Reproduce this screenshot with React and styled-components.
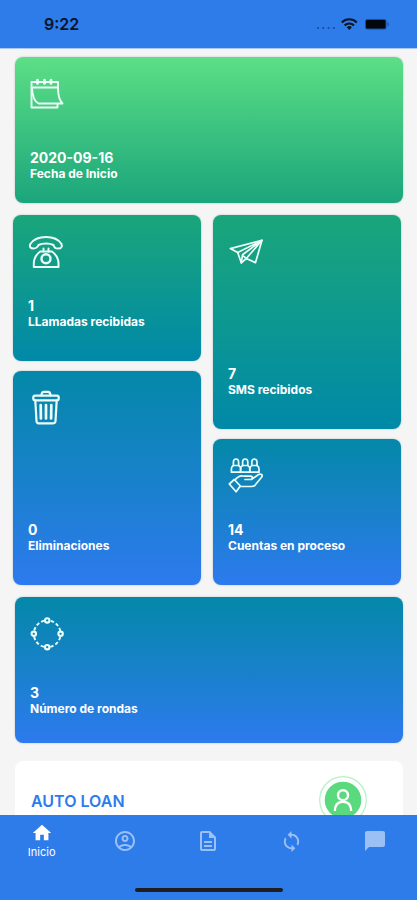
import React from "react";
import styled, { createGlobalStyle } from "styled-components";
import {
  MdHome,
  MdOutlineAccountCircle,
  MdOutlineDescription,
  MdSync,
  MdChatBubble,
} from "react-icons/md";

const BLUE = "#2e7bea";

const GlobalStyle = createGlobalStyle`
  *, *::before, *::after { box-sizing: border-box; }
  body { margin: 0; font-family: Inter, "Liberation Sans", sans-serif; }
`;

const Screen = styled.div`
  display: flex;
  flex-direction: column;
  height: 100vh;
  background: #f5f5f5;
`;

const StatusBar = styled.header`
  flex: none;
  display: flex;
  align-items: center;
  justify-content: space-between;
  height: 49px;
  padding: 0 27px 0 44px;
  background: ${BLUE};
  border-bottom: 1px solid #a9c8f8;
  color: #0b1526;
`;

const Clock = styled.time`
  font-size: 16px;
  font-weight: 600;
  line-height: 24px;
`;

const Content = styled.main`
  flex: 1;
  min-height: 0;
  display: flex;
  flex-direction: column;
  gap: 12px;
  padding-top: 8px;
  overflow-y: auto;
  scrollbar-width: none;
`;

const FullRow = styled.div`
  flex: none;
  padding: 0 14px 0 15px;
`;

const Columns = styled.div`
  flex: none;
  display: grid;
  grid-template-columns: 1fr 1fr;
  gap: 12px;
  padding: 0 16px 0 13px;
`;

const Column = styled.div`
  display: flex;
  flex-direction: column;
  gap: 10px;
`;

const tones = {
  green: "#5cdf85, #1ba57c",
  teal: "#1aa67a, #0089a8",
  blue: "#0488a8, #2d7aee",
};

const Card = styled.section`
  display: flex;
  flex-direction: column;
  min-height: ${(p) => (p.$tall ? 214 : 146)}px;
  padding: 19px 15px ${(p) => p.$bottom}px;
  border-radius: 8px;
  background: linear-gradient(${(p) => tones[p.$tone]});
  box-shadow: 0 0 2px rgba(0, 60, 90, 0.3);
  color: #fff;
`;

const CardIcon = styled.svg.attrs({
  viewBox: "0 0 36 36",
  fill: "none",
  stroke: "#ecfdf8",
  strokeLinejoin: "round",
  strokeLinecap: "round",
  "aria-hidden": true,
})`
  width: 36px;
  height: 36px;
  margin-bottom: auto;
  stroke-width: ${(p) => p.$weight || 2}px;
`;

const Value = styled.strong`
  font-size: 14px;
  font-weight: 700;
  line-height: 16px;
`;

const Label = styled.span`
  font-size: 12px;
  font-weight: 700;
  line-height: 16px;
`;

const LoanCard = styled.section`
  display: flex;
  align-items: flex-start;
  justify-content: space-between;
  min-height: 160px;
  margin-top: 6px;
  padding: 15px 36px 0 16px;
  border-radius: 8px;
  background: #fff;
`;

const LoanTitle = styled.h2`
  margin: 0;
  font-size: 16px;
  font-weight: 600;
  line-height: 50px;
  color: ${BLUE};
`;

const TabBar = styled.nav`
  position: relative;
  flex: none;
  display: grid;
  grid-template-columns: repeat(5, 1fr);
  align-items: start;
  height: 85px;
  background: ${BLUE};
`;

const Tab = styled.button`
  display: flex;
  flex-direction: column;
  align-items: center;
  justify-content: center;
  height: 52px;
  padding: 0;
  border: 0;
  background: none;
  color: ${(p) => (p.$active ? "#fff" : "#9ac0f6")};
  font-family: inherit;
  font-size: 11px;
  line-height: 16px;
  cursor: pointer;
`;

const HomeIndicator = styled.div`
  position: absolute;
  bottom: 8px;
  left: 50%;
  width: 148px;
  height: 4px;
  transform: translateX(-50%);
  border-radius: 2px;
  background: #1f1d22;
`;

function StatusIcons() {
  return (
    <svg width="74" height="16" viewBox="0 0 74 16" aria-hidden="true">
      <g fill="#1c4c96">
        <circle cx="2" cy="12" r="1.1" />
        <circle cx="7.3" cy="12" r="1.1" />
        <circle cx="12.6" cy="12" r="1.1" />
        <circle cx="17.9" cy="12" r="1.1" />
      </g>
      <g fill="none" stroke="#0b1526" strokeWidth="2.1">
        <path d="M25.8 6.4a10.6 10.6 0 0 1 15 0" />
        <path d="M28.6 9.4a6.7 6.7 0 0 1 9.4 0" />
      </g>
      <path d="M33.3 14l-2.6-2.8a3.8 3.8 0 0 1 5.2 0z" fill="#0b1526" />
      <rect x="49" y="3" width="21.5" height="10.5" rx="2.5" fill="#1c4c96" />
      <rect x="50" y="4" width="19.5" height="8.5" rx="1.2" fill="#02060d" />
      <path d="M71.6 6.2c1.7.7 1.7 3.3 0 4z" fill="#1c4c96" />
    </svg>
  );
}

const CalendarIcon = () => (
  <CardIcon $weight={1.9}>
    <path d="M1.5 6H28v5.5H1.5M1.5 6v25.5h26V28" />
    <path d="M2 12c.4 8 2.4 13.5 6.5 15.500h24C29.5 24.5 28 20 28 11.5" />
    <path d="M7.5 4.2v3.2M14.5 4.2v3.2M21 4.2v3.2" strokeWidth="2.8" />
  </CardIcon>
);

const PhoneIcon = () => (
  <CardIcon>
    <path d="M2.3 10C6 4.5 12 3 18 3s12 1.5 15.500 7c1.2 2.8-.5 4.5-3.500 4.500S26.5 13.5 25.5 11c-4-2-11-2-15 0-1 2.5-2 3.500-5 3.500S1.1 12.8 2.3 10z" />
    <path d="M5.8 33h24.700v-3.500c0-5-2.500-9-6.500-12H12.2c-4 3-6.400 7-6.400 12z" />
    <path d="M15.5 14.5v3M20.500 14.5v3" />
    <circle cx="18" cy="24.8" r="4.5" strokeWidth="2.4" />
  </CardIcon>
);

const TrashIcon = () => (
  <CardIcon $weight={2.2}>
    <path d="M13.5 5.500c0-2.500 1-3.700 2.500-3.700h4c1.500 0 2.500 1.200 2.500 3.700" />
    <rect x="5.3" y="5.7" width="25.400" height="4.6" rx="1.8" />
    <path d="M7.3 10.500l1.200 20.500c.1 1.400.8 2.300 2.200 2.300h14.600c1.400 0 2.100-.9 2.200-2.300l1.200-20.500" />
    <path d="M12.7 15l.2 13.500M18 15v13.500M23.3 15l-.2 13.500" strokeWidth="2.700" />
  </CardIcon>
);

const PlaneIcon = () => (
  <CardIcon $weight={1.7}>
    <path d="M34 6.3L2.3 14.6l7.400 4 3.600 10.200 5-4.300 9.200 4.100z" />
    <path d="M34 6.3L9.7 18.6M34 6.3L14.5 20.8l-1.200 8M34 6.3L18.3 24.5l-3.500-2.800" />
  </CardIcon>
);

const HandIcon = () => (
  <CardIcon $weight={1.7}>
    {[3.4, 12.6, 21.8].map((x) => (
      <g key={x}>
        <path d={`M${x + 2} 7.500V4a2.600 3 0 0 1 5.200 0v3.500z`} />
        <path d={`M${x + 2} 7.500c-1.500.8-2 1.600-2 3.200v3.500h9.200v-3.500c0-1.600-.5-2.400-2-3.200`} />
      </g>
    ))}
    <path d="M1.3 26l5-4.500 6 6.500-4.200 5.800z" />
    <path d="M7 22c3-4 5.500-5 9-3.800h6.500c2.500 0 2.500 3.300 0 3.300H17h6.500L30.500 16.500c2.500-1.300 4.500.5 3.200 2.500L27 27.300c-1 1-2 1.200-4 1.200H12.300" />
  </CardIcon>
);

const RoundsIcon = () => (
  <CardIcon $weight={1.9}>
    <circle
      cx="17.2"
      cy="17.8"
      r="13.4"
      strokeLinecap="butt"
      strokeDasharray="3.4 2.2 3.4 2.2 3.4 6.449"
      strokeDashoffset="-3.2"
    />
    {[[17.2, 4.4], [30.6, 17.8], [17.2, 31.2], [3.8, 17.8]].map(([x, y]) => (
      <circle key={`${x}-${y}`} cx={x} cy={y} r="2.2" strokeWidth="2.1" fill="#1482b9" />
    ))}
  </CardIcon>
);

function LoanAvatar() {
  return (
    <svg width="48" height="48" viewBox="0 0 48 48" aria-hidden="true">
      <circle cx="24" cy="24" r="23.3" fill="none" stroke="#b5f0c6" strokeWidth="1.2" />
      <circle cx="24" cy="24" r="18.3" fill="#5bd97f" />
      <g fill="none" stroke="#fff" strokeWidth="2.4">
        <circle cx="24" cy="19.2" r="5" />
        <path d="M15.8 35c.2-6.200 3.500-9.200 8.200-9.200s8 3 8.200 9.200" />
      </g>
    </svg>
  );
}

function StatCard({ icon, value, label, tone, tall, bottom }) {
  return (
    <Card $tone={tone} $tall={tall} $bottom={bottom}>
      {icon}
      <Value>{value}</Value>
      <Label>{label}</Label>
    </Card>
  );
}

export default function App() {
  return (
    <Screen>
      <GlobalStyle />
      <StatusBar>
        <Clock>9:22</Clock>
        <StatusIcons />
      </StatusBar>
      <Content>
        <FullRow>
          <StatCard icon={<CalendarIcon />} value="2020-09-16" label="Fecha de Inicio" tone="green" bottom={21} />
        </FullRow>
        <Columns>
          <Column>
            <StatCard icon={<PhoneIcon />} value="1" label="LLamadas recibidas" tone="teal" bottom={31} />
            <StatCard icon={<TrashIcon />} value="0" label="Eliminaciones" tone="blue" tall bottom={31} />
          </Column>
          <Column>
            <StatCard icon={<PlaneIcon />} value="7" label="SMS recibidos" tone="teal" tall bottom={31} />
            <StatCard icon={<HandIcon />} value="14" label="Cuentas en proceso" tone="blue" bottom={31} />
          </Column>
        </Columns>
        <FullRow>
          <StatCard icon={<RoundsIcon />} value="3" label="Número de rondas" tone="blue" bottom={26} />
        </FullRow>
        <FullRow>
          <LoanCard>
            <LoanTitle>AUTO LOAN</LoanTitle>
            <LoanAvatar />
          </LoanCard>
        </FullRow>
      </Content>
      <TabBar aria-label="Principal">
        <Tab type="button" $active aria-current="page">
          <MdHome size={22} />
          Inicio
        </Tab>
        <Tab type="button" aria-label="Perfil">
          <MdOutlineAccountCircle size={24} />
        </Tab>
        <Tab type="button" aria-label="Documentos">
          <MdOutlineDescription size={24} />
        </Tab>
        <Tab type="button" aria-label="Sincronizar">
          <MdSync size={23} />
        </Tab>
        <Tab type="button" aria-label="Mensajes">
          <MdChatBubble size={24} />
        </Tab>
        <HomeIndicator />
      </TabBar>
    </Screen>
  );
}
